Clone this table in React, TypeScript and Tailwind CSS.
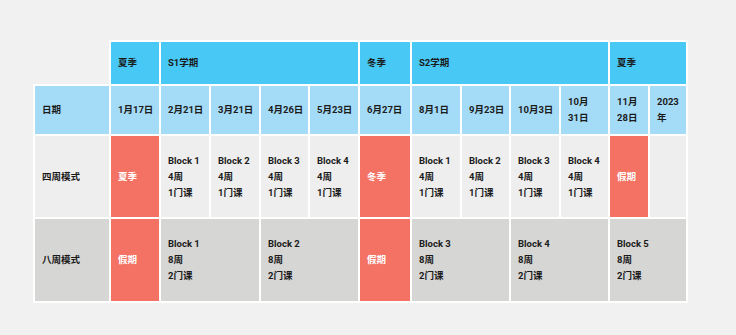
const font = 'Roboto, "Noto Sans CJK SC", sans-serif';

const cols = [76, 50, 50, 50, 49, 50, 52, 50, 49, 50, 49, 40, 38];

const dates = [
  '1月17日', '2月21日', '3月21日', '4月26日', '5月23日', '6月27日',
  '8月1日', '9月23日', '10月3日', '10月 31日', '11月 28日', '2023 年',
];

const cell = 'border-2 border-white pl-[7px] pr-0 align-middle whitespace-nowrap text-[9.5px] font-bold leading-4 text-[#1b1b1b]';
const red = 'bg-[#f47264] text-white';

function BlockCell({ name, weeks, courses, span = 1, bg }: { name: string; weeks: string; courses: string; span?: number; bg: string }) {
  return (
    <td colSpan={span} className={`${cell} ${bg}`}>
      <div>{name}</div>
      <div>{weeks}</div>
      <div>{courses}</div>
    </td>
  );
}

export default function App() {
  const four = ['Block 1', 'Block 2', 'Block 3', 'Block 4'];
  return (
    <div className="min-h-[335px] w-[736px] bg-[#f1f1f1] pl-[33px] pt-[40px]" style={{ fontFamily: font }}>
      <table className="table-fixed border-collapse" style={{ width: 653 }}>
        <colgroup>
          {cols.map((w, i) => (
            <col key={i} style={{ width: w }} />
          ))}
        </colgroup>
        <tbody>
          <tr className="h-[44px]">
            <td className="border-0" />
            <td className={`${cell} bg-[#47c8f5]`}>夏季</td>
            <td colSpan={4} className={`${cell} bg-[#47c8f5]`}>S1学期</td>
            <td className={`${cell} bg-[#47c8f5]`}>冬季</td>
            <td colSpan={4} className={`${cell} bg-[#47c8f5]`}>S2学期</td>
            <td colSpan={2} className={`${cell} bg-[#47c8f5]`}>夏季</td>
          </tr>
          <tr className="h-[50px]">
            <td className={`${cell} bg-[#a4dcf8]`}>日期</td>
            {dates.map((d) => (
              <td key={d} className={`${cell} bg-[#a4dcf8]`}>
                {d.split(' ').map((p) => (
                  <div key={p}>{p}</div>
                ))}
              </td>
            ))}
          </tr>
          <tr className="h-[83px]">
            <td className={`${cell} bg-[#eeeeee]`}>四周模式</td>
            <td className={`${cell} ${red}`}>夏季</td>
            {four.map((b) => (
              <BlockCell key={'a' + b} name={b} weeks="4周" courses="1门课" bg="bg-[#eeeeee]" />
            ))}
            <td className={`${cell} ${red}`}>冬季</td>
            {four.map((b) => (
              <BlockCell key={'b' + b} name={b} weeks="4周" courses="1门课" bg="bg-[#eeeeee]" />
            ))}
            <td className={`${cell} ${red}`}>假期</td>
            <td className={`${cell} bg-[#eeeeee]`} />
          </tr>
          <tr className="h-[84px]">
            <td className={`${cell} bg-[#d6d6d4]`}>八周模式</td>
            <td className={`${cell} ${red}`}>假期</td>
            <BlockCell name="Block 1" weeks="8周" courses="2门课" span={2} bg="bg-[#d6d6d4]" />
            <BlockCell name="Block 2" weeks="8周" courses="2门课" span={2} bg="bg-[#d6d6d4]" />
            <td className={`${cell} ${red}`}>假期</td>
            <BlockCell name="Block 3" weeks="8周" courses="2门课" span={2} bg="bg-[#d6d6d4]" />
            <BlockCell name="Block 4" weeks="8周" courses="2门课" span={2} bg="bg-[#d6d6d4]" />
            <BlockCell name="Block 5" weeks="8周" courses="2门课" span={2} bg="bg-[#d6d6d4]" />
          </tr>
        </tbody>
      </table>
    </div>
  );
}
